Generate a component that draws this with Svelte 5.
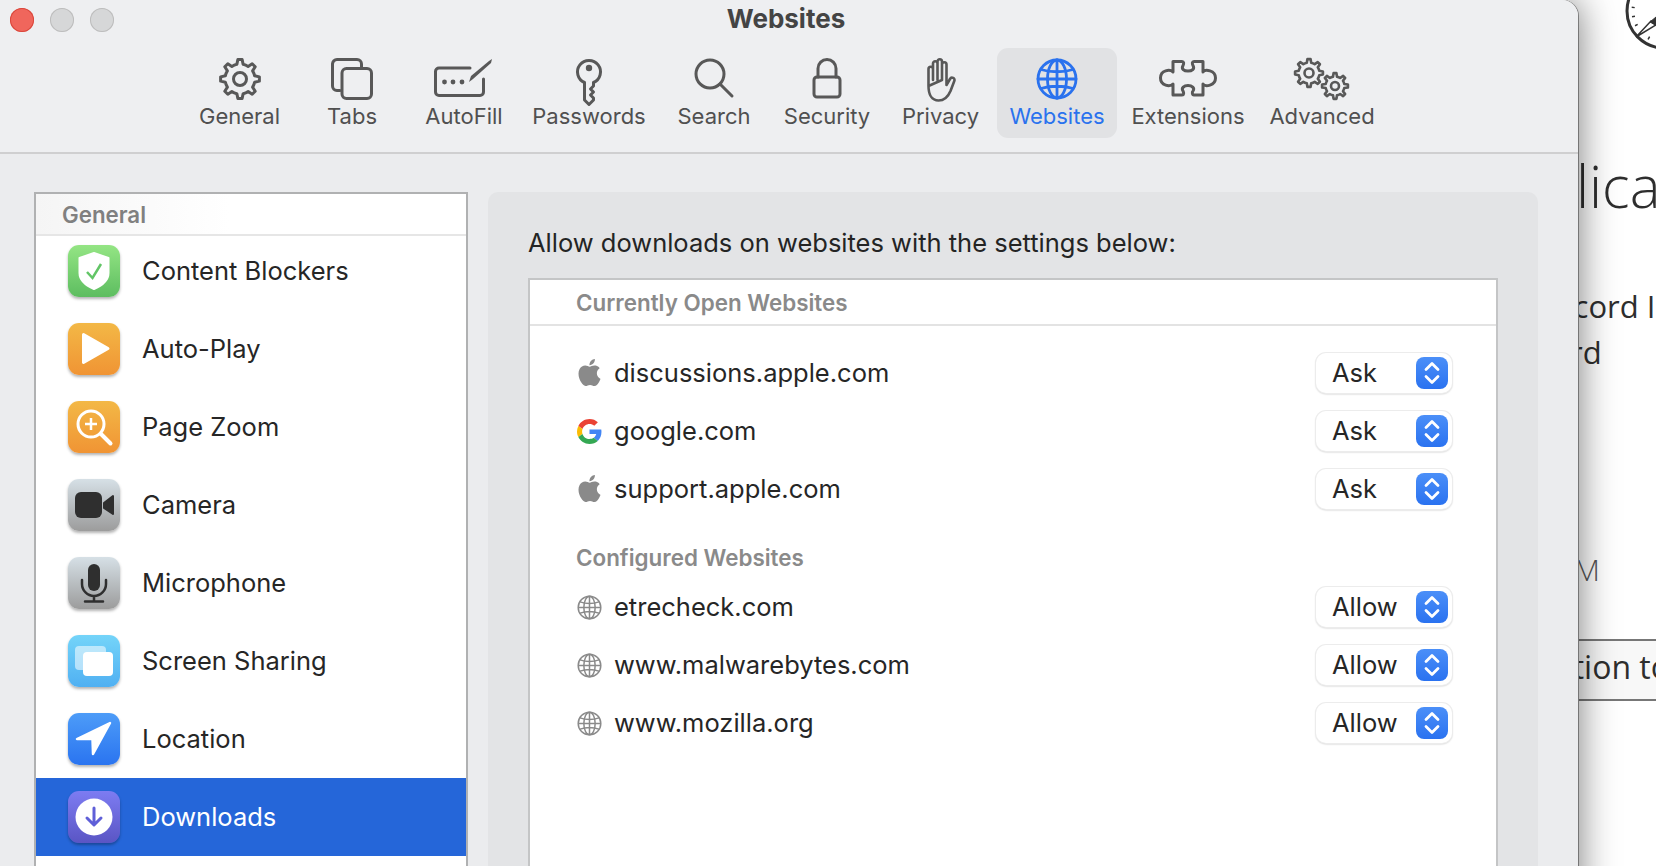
<script>
  function gear(cx, cy, ro, ri, n) {
    const s = (Math.PI * 2) / n;
    const p = (r, a) => `${(cx + r * Math.cos(a)).toFixed(2)} ${(cy + r * Math.sin(a)).toFixed(2)}`;
    let d = '';
    for (let i = 0; i < n; i++) {
      const a = i * s - Math.PI / 2;
      d += `${i ? 'L' : 'M'}${p(ri, a - s * 0.27)} L${p(ro, a - s * 0.14)} L${p(ro, a + s * 0.14)} L${p(ri, a + s * 0.27)} `;
      d += `A${ri} ${ri} 0 0 1 ${p(ri, a + s * 0.73)} `;
    }
    return d + 'Z';
  }

  const tools = [
    { id: 'general', label: 'General', w: 113, iw: 42, ih: 42 },
    { id: 'tabs', label: 'Tabs', w: 112, iw: 42, ih: 42 },
    { id: 'autofill', label: 'AutoFill', w: 112, iw: 60, ih: 40 },
    { id: 'key', label: 'Passwords', w: 138, iw: 26, ih: 48 },
    { id: 'search', label: 'Search', w: 112, iw: 40, ih: 40 },
    { id: 'lock', label: 'Security', w: 114, iw: 30, ih: 40 },
    { id: 'hand', label: 'Privacy', w: 113, iw: 36, ih: 44 },
    { id: 'globe', label: 'Websites', w: 120, iw: 42, ih: 42, active: true },
    { id: 'puzzle', label: 'Extensions', w: 142, iw: 58, ih: 40 },
    { id: 'gears', label: 'Advanced', w: 126, iw: 56, ih: 42 }
  ];

  const sideItems = [
    { id: 'shield', label: 'Content Blockers' },
    { id: 'play', label: 'Auto-Play' },
    { id: 'zoom', label: 'Page Zoom' },
    { id: 'camera', label: 'Camera' },
    { id: 'mic', label: 'Microphone' },
    { id: 'screen', label: 'Screen Sharing' },
    { id: 'location', label: 'Location' },
    { id: 'download', label: 'Downloads', selected: true }
  ];

  const openSites = [
    { icon: 'apple', name: 'discussions.apple.com', value: 'Ask' },
    { icon: 'google', name: 'google.com', value: 'Ask' },
    { icon: 'apple', name: 'support.apple.com', value: 'Ask' }
  ];
  const configured = [
    { icon: 'globe', name: 'etrecheck.com', value: 'Allow' },
    { icon: 'globe', name: 'www.malwarebytes.com', value: 'Allow' },
    { icon: 'globe', name: 'www.mozilla.org', value: 'Allow' }
  ];
</script>

{#snippet globeLines()}
  <circle cx="21" cy="21" r="19" />
  <ellipse cx="21" cy="21" rx="9.5" ry="19" />
  <path d="M21 2V40M2 21H40M5 11.5C14 14.5 28 14.5 37 11.5M5 30.5C14 27.5 28 27.5 37 30.5" />
{/snippet}

{#snippet toolIcon(id)}
  {#if id === 'general'}
    <svg viewBox="0 0 42 42" class="stroke"><path d={gear(21, 21, 19.5, 15, 8)} /><circle cx="21" cy="21" r="6.5" /></svg>
  {:else if id === 'tabs'}
    <svg viewBox="0 0 42 42" class="stroke">
      <path d="M9 32.5H6A4.5 4.5 0 0 1 1.5 28V6A4.5 4.5 0 0 1 6 1.5H26A4.5 4.5 0 0 1 30.5 6V10" />
      <rect x="11" y="10.5" width="29.5" height="30" rx="4.5" />
    </svg>
  {:else if id === 'autofill'}
    <svg viewBox="0 0 60 40" class="stroke">
      <path d="M36 10H5A3.5 3.5 0 0 0 1.5 13.5V34A3.5 3.5 0 0 0 5 37.5H46A3.5 3.5 0 0 0 49.5 34V21" />
      <circle cx="10.5" cy="24" r="2.4" class="dot" /><circle cx="19" cy="24" r="2.4" class="dot" /><circle cx="28" cy="24" r="2.4" class="dot" />
      <path d="M35 24L37 18L55 3L58 1L57 5L39 21Z" class="dot" />
    </svg>
  {:else if id === 'key'}
    <svg viewBox="0 0 26 48" class="stroke">
      <path d="M8.5 24.5A11.5 11.5 0 1 1 17.5 24.5V28L14.5 31L17.5 34L14.5 37L17.5 40V42L13 46.5L8.5 42Z" />
      <circle cx="13" cy="10" r="3.2" class="dot" />
    </svg>
  {:else if id === 'search'}
    <svg viewBox="0 0 40 40" class="stroke"><circle cx="16" cy="16" r="14" /><path d="M26 26L38 38" /></svg>
  {:else if id === 'lock'}
    <svg viewBox="0 0 30 40" class="stroke">
      <rect x="2" y="19" width="26" height="20" rx="3" />
      <path d="M6 19V10.5A9 9 0 0 1 24 10.5V19" />
    </svg>
  {:else if id === 'hand'}
    <svg viewBox="0 0 36 44" class="stroke thin">
      <path d="M5.5 28V11A2.2 2.2 0 0 1 10 11V22M10 22V5.5A2.2 2.2 0 0 1 14.500 5.500V22M14.500 22V3.500A2.200 2.200 0 0 1 19 3.500V22M19 22V6.500A2.200 2.200 0 0 1 23.500 6.500V27L27 21A2.300 2.300 0 0 1 31.300 23L27.500 33C25 39 21 42.500 15.500 42.500C9 42.500 5.500 37 5.500 28Z" />
    </svg>
  {:else if id === 'globe'}
    <svg viewBox="0 0 42 42" class="stroke blue">{@render globeLines()}</svg>
  {:else if id === 'puzzle'}
    <svg viewBox="0 0 58 40" class="stroke">
      <path d="M14 3.500H23C25 3.500 25 5.500 24 7.500C22 11 25 13 29 13C33 13 36 11 34 7.500C33 5.500 33 3.500 35 3.500H44V14C46 11 56.500 12 56.500 20C56.500 28 46 29 44 26V37H35C33 37 33 34 34 33C36 30 33 27.500 29 27.500C25 27.500 22 30 24 33C25 35 25 37 23 37H14V26C11 29 1.500 28 1.500 20C1.500 12 11 11 14 14Z" />
    </svg>
  {:else}
    <svg viewBox="0 0 56 42" class="stroke thin">
      <path d={gear(15, 15, 14, 10.5, 8)} /><circle cx="15" cy="15" r="4.5" />
      <path d={gear(41, 28, 13, 9.500, 8)} /><circle cx="41" cy="28" r="4" />
    </svg>
  {/if}
{/snippet}

{#snippet sideIcon(id)}
  {#if id === 'shield'}
    <svg viewBox="0 0 52 52">
      <path d="M26 8L40.500 13V28C40.500 36 33 41 26 44C19 41 11.500 36 11.500 28V13Z" fill="#fff" stroke="#fff" stroke-width="2" stroke-linejoin="round" />
      <path d="M19 27L24.500 33L33 19" fill="none" stroke="#62c566" stroke-width="2.500" />
    </svg>
  {:else if id === 'play'}
    <svg viewBox="0 0 52 52"><path d="M15.500 11.500L40 25.500L15.500 39.500Z" fill="#fff" stroke="#fff" stroke-width="3" stroke-linejoin="round" /></svg>
  {:else if id === 'zoom'}
    <svg viewBox="0 0 52 52" fill="none" stroke="#fff">
      <circle cx="23" cy="23" r="13" stroke-width="3" />
      <path d="M33 33L42.500 42.500" stroke-width="4" stroke-linecap="round" />
      <path d="M23 17V29M17 23H29" stroke-width="2.500" />
    </svg>
  {:else if id === 'camera'}
    <svg viewBox="0 0 52 52" fill="#2f2f2f">
      <rect x="7" y="13" width="27" height="26" rx="6" />
      <path d="M36 24L45 17V35L36 29Z" stroke="#2f2f2f" stroke-width="2" stroke-linejoin="round" />
    </svg>
  {:else if id === 'mic'}
    <svg viewBox="0 0 52 52">
      <rect x="20" y="7" width="12" height="27" rx="6" fill="#2f2f2f" />
      <path d="M14 23V27A12 12 0 0 0 38 27V23M26 39V44M17 44.500H35" fill="none" stroke="#2f2f2f" stroke-width="2.500" stroke-linecap="round" />
    </svg>
  {:else if id === 'screen'}
    <svg viewBox="0 0 52 52">
      <rect x="7" y="11" width="31" height="24" rx="4" fill="#fff" opacity=".55" />
      <rect x="15" y="17" width="30" height="24" rx="4" fill="#fff" />
    </svg>
  {:else if id === 'location'}
    <svg viewBox="0 0 52 52"><path d="M42 10L9 26H24.500L25 41Z" fill="#fff" stroke="#fff" stroke-width="2.500" stroke-linejoin="round" /></svg>
  {:else}
    <svg viewBox="0 0 52 52">
      <circle cx="26" cy="26" r="18.500" fill="#fff" />
      <path d="M26 17V33M19 27L26 34L33 27" fill="none" stroke="#5f5fd8" stroke-width="3" stroke-linecap="round" stroke-linejoin="round" />
    </svg>
  {/if}
{/snippet}

{#snippet siteIcon(kind)}
  {#if kind === 'apple'}
    <svg class="fav apple" viewBox="0 0 24 24" fill="#8a8a8a"><path d="M12.152 6.896c-.948 0-2.415-1.078-3.96-1.04-2.04.027-3.91 1.183-4.961 3.014-2.117 3.675-.546 9.103 1.519 12.09 1.013 1.454 2.208 3.09 3.792 3.039 1.52-.065 2.09-.987 3.935-.987 1.831 0 2.35.987 3.96.948 1.637-.026 2.676-1.48 3.676-2.948 1.156-1.688 1.636-3.325 1.662-3.415-.039-.013-3.182-1.221-3.22-4.857-.026-3.04 2.48-4.494 2.597-4.559-1.429-2.09-3.623-2.324-4.39-2.376-2-.156-3.675 1.09-4.61 1.09zM15.53 3.83c.843-1.012 1.4-2.427 1.245-3.83-1.207.052-2.662.805-3.532 1.818-.78.896-1.454 2.338-1.273 3.714 1.338.104 2.715-.688 3.559-1.701" /></svg>
  {:else if kind === 'google'}
    <svg class="fav" viewBox="0 0 48 48">
      <path fill="#EA4335" d="M24 9.500c3.540 0 6.710 1.220 9.210 3.600l6.850-6.850C35.900 2.380 30.470 0 24 0 14.620 0 6.510 5.380 2.560 13.220l7.980 6.190C12.430 13.720 17.740 9.500 24 9.500z" />
      <path fill="#4285F4" d="M46.980 24.550c0-1.570-.15-3.090-.38-4.550H24v9.020h12.940c-.58 2.960-2.260 5.480-4.780 7.180l7.730 6c4.510-4.180 7.090-10.360 7.090-17.650z" />
      <path fill="#FBBC05" d="M10.530 28.590c-.48-1.450-.76-2.990-.76-4.590s.270-3.140.760-4.590l-7.980-6.190C.92 16.460 0 20.120 0 24c0 3.880.92 7.540 2.560 10.780l7.970-6.190z" />
      <path fill="#34A853" d="M24 48c6.480 0 11.930-2.130 15.890-5.810l-7.730-6c-2.150 1.450-4.920 2.300-8.160 2.300-6.260 0-11.570-4.220-13.470-9.910l-7.980 6.190C6.510 42.620 14.620 48 24 48z" />
    </svg>
  {:else}
    <svg class="fav" viewBox="0 0 42 42" fill="none" stroke="#8a8a8a" stroke-width="2.500">{@render globeLines()}</svg>
  {/if}
{/snippet}

{#snippet site(row)}
  <li class="site">
    <span class="fav-slot">{@render siteIcon(row.icon)}</span>
    <span class="site-name">{row.name}</span>
    <div class="select">
      <span class="value">{row.value}</span>
      <span class="stepper">
        <svg viewBox="0 0 32 32" fill="none" stroke="#fff" stroke-width="2.800" stroke-linecap="round" stroke-linejoin="round"><path d="M10 12.500L16 6.500L22 12.500M10 19.500L16 25.500L22 19.500" /></svg>
      </span>
    </div>
  </li>
{/snippet}

<div class="desktop">
  <div class="behind">
    <svg class="compass" viewBox="0 0 80 80" fill="none" stroke="#333">
      <circle cx="40" cy="40" r="37" stroke-width="3" />
      <circle cx="40" cy="40" r="31" stroke-width="3" stroke-dasharray="1.500 7.600" />
      <path d="M12 66L27 50L32 54Z" fill="#fff" stroke-width="1.500" />
      <path d="M26 51L44 36L33 55Z" fill="#333" />
    </svg>
    <p class="big">Application</p>
    <p class="copy one">Record I</p>
    <p class="copy two">Record</p>
    <p class="copy am">AM</p>
    <div class="band">Application to</div>
  </div>

  <div class="window">
    <header class="toolbar">
      <div class="lights"><i class="red"></i><i></i><i></i></div>
      <h1>Websites</h1>
      <nav class="tools">
        {#each tools as t}
          <div class="tool" class:active={t.active} style:width="{t.w}px">
            <span class="tool-icon" style:width="{t.iw}px" style:height="{t.ih}px">{@render toolIcon(t.id)}</span>
            <span class="tool-label">{t.label}</span>
          </div>
        {/each}
      </nav>
    </header>

    <main class="body">
      <aside class="sidebar">
        <div class="side-head">General</div>
        <ul>
          {#each sideItems as s}
            <li class="side-row" class:selected={s.selected}>
              <span class="app-icon {s.id}">{@render sideIcon(s.id)}</span>
              <span class="side-label">{s.label}</span>
            </li>
          {/each}
        </ul>
      </aside>

      <section class="panel">
        <h2>Allow downloads on websites with the settings below:</h2>
        <div class="sites">
          <div class="sites-head">Currently Open Websites</div>
          <ul class="first">
            {#each openSites as r}{@render site(r)}{/each}
          </ul>
          <div class="sub-head">Configured Websites</div>
          <ul>
            {#each configured as r}{@render site(r)}{/each}
          </ul>
        </div>
      </section>
    </main>
  </div>
</div>

<style>
  :global(body) { margin: 0; background: #fff; }
  ul { list-style: none; margin: 0; padding: 0; }
  .desktop {
    position: relative;
    width: 1656px;
    height: 866px;
    overflow: hidden;
    background: #fff;
    font-family: Inter, "Liberation Sans", sans-serif;
  }
  .behind { position: absolute; inset: 0; font-family: "Open Sans", sans-serif; color: #2e2e2e; }
  .compass { position: absolute; left: 1624px; top: -29px; width: 80px; height: 80px; }
  .behind p { position: absolute; margin: 0; white-space: nowrap; }
  .big { left: 1472px; top: 146px; font-size: 58px; font-weight: 300; line-height: 80px; }
  .copy { font-size: 31px; line-height: 44px; font-weight: 400; }
  .one { left: 1537px; top: 284px; }
  .two { left: 1500px; top: 330px; }
  .am { left: 1556px; top: 548px; font-size: 30px; font-weight: 300; color: #555; }
  .band {
    position: absolute;
    left: 1400px;
    right: 0;
    top: 639px;
    height: 58px;
    border-top: 2px solid #777;
    border-bottom: 2px solid #777;
    background: #f8f8f8;
    font-size: 32px;
    line-height: 52px;
    white-space: nowrap;
    padding-left: 64px;
  }

  .window {
    position: absolute;
    left: -12px;
    top: 0;
    width: 1590px;
    height: 920px;
    background: #ebecee;
    border-top-right-radius: 16px;
    box-shadow: 0 0 38px rgba(0, 0, 0, .55), 1px 0 0 #a0a0a0;
    overflow: hidden;
  }
  .toolbar {
    position: relative;
    height: 152px;
    background: #eeeff1;
    border-bottom: 2px solid #cfcfd0;
    box-sizing: content-box;
  }
  .lights { position: absolute; left: 22px; top: 8px; display: flex; gap: 16px; }
  .lights i {
    width: 24px; height: 24px; border-radius: 50%;
    background: #d6d7d8; box-shadow: inset 0 0 0 1px #bdbdbd;
  }
  .lights .red { background: #f0665c; box-shadow: inset 0 0 0 1px #d9473c; }
  h1 {
    margin: 0;
    height: 38px;
    padding-left: 6px;
    text-align: center;
    font-size: 26px;
    line-height: 38px;
    font-weight: 700;
    color: #444;
  }
  .tools { display: flex; margin-top: 10px; padding-left: 195px; }
  .tool {
    height: 90px;
    box-sizing: border-box;
    border-radius: 11px;
    display: flex;
    flex-direction: column;
    align-items: center;
    color: #505050;
  }
  .tool.active { background: #e1e2e4; color: #2a72ee; }
  .tool-icon { height: 42px; margin-top: 10px; margin-bottom: 8px; display: flex; align-items: center; justify-content: center; flex: none; }
  .tool-icon svg { width: 100%; height: 100%; display: block; overflow: visible; }
  .tool-label { font-size: 22px; line-height: 24px; white-space: nowrap; position: absolute; top: 104px; }
  .stroke { fill: none; stroke: #585858; stroke-width: 3; stroke-linejoin: round; stroke-linecap: round; }
  .stroke.thin { stroke-width: 2.600; }
  .stroke.blue { stroke: #2a72ee; stroke-width: 2.800; }
  .dot { fill: #585858; stroke: none; }

  .body { display: flex; gap: 20px; padding: 38px 40px 0 46px; height: 760px; background: #ebecee; }
  .sidebar {
    width: 434px;
    flex: none;
    box-sizing: border-box;
    border: 2px solid #b0b1b2;
    border-bottom: 0;
    background: #fff;
  }
  .side-head {
    height: 42px;
    box-sizing: border-box;
    padding-left: 26px;
    border-bottom: 2px solid #e6e6e6;
    background: linear-gradient(to right, #f5f5f5, #fff 45%);
    font-size: 22.3px;
    font-weight: 600;
    line-height: 42px;
    color: #808080;
  }
  .sidebar ul { margin-top: -4px; }
  .side-row {
    height: 78px;
    display: flex;
    align-items: center;
    gap: 22px;
    padding-left: 32px;
    font-size: 25.5px;
    color: #262626;
  }
  .side-label { margin-bottom: 2px; }
  .side-row.selected { background: #2566d9; color: #fff; }
  .app-icon {
    width: 52px;
    height: 52px;
    border-radius: 11px;
    flex: none;
    box-shadow: 0 2px 3px rgba(0, 0, 0, .3);
  }
  .app-icon svg { display: block; width: 52px; height: 52px; }
  .shield { background: linear-gradient(#94e584, #5dbd60); }
  .play, .zoom { background: linear-gradient(#f3b846, #f09434); }
  .camera, .mic { background: linear-gradient(#d6e0e6, #9c9c9c); }
  .screen { background: linear-gradient(#74d4f9, #50b0f2); }
  .location { background: linear-gradient(#4d9cf8, #2a74f0); }
  .download { background: linear-gradient(#7d7cf2, #5a55c4); }

  .panel {
    flex: 1;
    box-sizing: border-box;
    padding: 0 40px;
    background: #e3e4e6;
    border-radius: 10px 10px 0 0;
  }
  h2 {
    margin: 0;
    height: 86px;
    box-sizing: border-box;
    padding-top: 34px;
    font-size: 25.5px;
    line-height: 34px;
    font-weight: 400;
    color: #242424;
    white-space: nowrap;
  }
  .sites {
    height: 700px;
    border: 2px solid #c4c5c6;
    border-bottom: 0;
    background: #fff;
  }
  .sites-head {
    height: 46px;
    box-sizing: border-box;
    padding-left: 46px;
    border-bottom: 2px solid #e3e3e3;
    font-size: 22.4px;
    font-weight: 600;
    line-height: 46px;
    color: #8a8a8a;
  }
  .sites ul.first { padding-top: 18px; }
  .sub-head {
    height: 60px;
    box-sizing: border-box;
    padding: 26px 0 0 46px;
    font-size: 22.4px;
    font-weight: 600;
    line-height: 28px;
    color: #8a8a8a;
  }
  .site {
    height: 58px;
    display: flex;
    align-items: center;
    padding: 0 44px 0 47px;
    font-size: 25.5px;
    color: #262626;
  }
  .fav-slot { width: 37px; flex: none; display: flex; }
  .fav { width: 25px; height: 25px; display: block; }
  .fav.apple { width: 27px; height: 27px; margin-left: -1px; margin-top: -2px; }
  .site-name { flex: 1; margin-bottom: 2px; }
  .select {
    width: 136px;
    height: 40px;
    box-sizing: border-box;
    padding: 0 4px 0 16px;
    display: flex;
    align-items: center;
    justify-content: space-between;
    background: #fff;
    border-radius: 10px;
    box-shadow: 0 0 0 1px #ececec, 0 1px 2px rgba(0, 0, 0, .3);
  }
  .value { margin-bottom: 2px; }
  .stepper {
    width: 32px;
    height: 32px;
    border-radius: 8px;
    background: linear-gradient(#4b8ff8, #2a72f0);
    display: block;
  }
  .stepper svg { display: block; }
</style>
